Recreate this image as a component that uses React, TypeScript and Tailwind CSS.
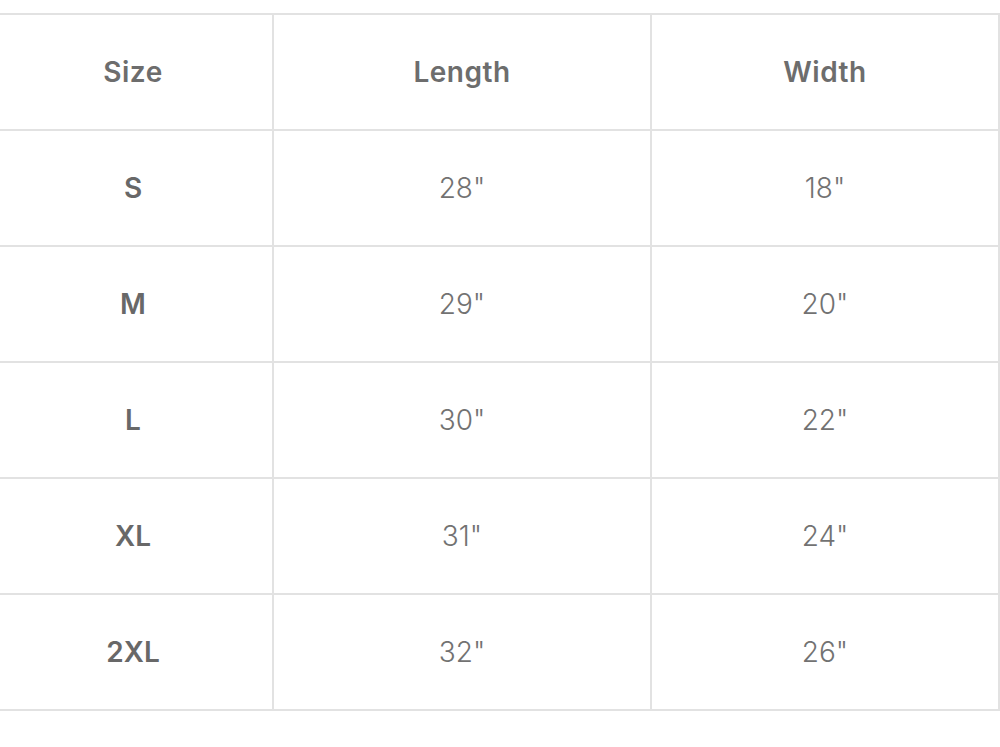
import React from "react";

const rows = [
  ["S", "28\"", "18\""],
  ["M", "29\"", "20\""],
  ["L", "30\"", "22\""],
  ["XL", "31\"", "24\""],
  ["2XL", "32\"", "26\""],
];

export default function App() {
  return (
    <div
      className="w-[1000px] h-[747px] bg-white overflow-hidden pt-[13px]"
      style={{ fontFamily: "Inter, 'Open Sans', sans-serif" }}
    >
      <div className="ml-[-8px] w-[1008px] border-t-2 border-l-2 border-[#e2e2e2]">
        <div className="grid grid-cols-[280px_378px_348px] h-[116px] text-[28px] font-semibold text-[#6d6d6d] tracking-[0.5px]">
          <div className="border-r-2 border-b-2 border-[#e2e2e2] flex items-center justify-center">Size</div>
          <div className="border-r-2 border-b-2 border-[#e2e2e2] flex items-center justify-center">Length</div>
          <div className="border-r-2 border-b-2 border-[#e2e2e2] flex items-center justify-center">Width</div>
        </div>
        {rows.map((r) => (
          <div key={r[0]} className="grid grid-cols-[280px_378px_348px] h-[116px] text-[28px] text-[#727272]">
            <div className="border-r-2 border-b-2 border-[#e2e2e2] flex items-center justify-center font-semibold text-[#686868]">{r[0]}</div>
            <div className="border-r-2 border-b-2 border-[#e2e2e2] flex items-center justify-center font-light">{r[1]}</div>
            <div className="border-r-2 border-b-2 border-[#e2e2e2] flex items-center justify-center font-light">{r[2]}</div>
          </div>
        ))}
      </div>
    </div>
  );
}
